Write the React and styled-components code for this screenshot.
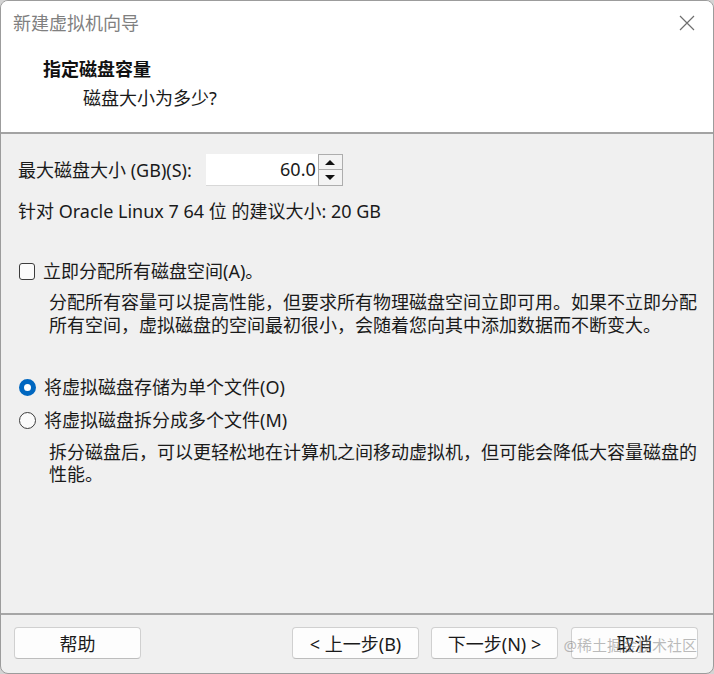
import React from 'react';
import styled, { createGlobalStyle } from 'styled-components';

const GlobalStyle = createGlobalStyle`
  html, body {
    margin: 0;
    padding: 0;
    background: #d4d4d4;
  }
  body {
    font-family: "Segoe UI", "Noto Sans", "Noto Sans CJK SC", sans-serif;
    color: #1a1a1a;
  }
`;

const Window = styled.div`
  box-sizing: border-box;
  width: 714px;
  height: 674px;
  display: flex;
  flex-direction: column;
  background: #f0f0f0;
  border: 1px solid #9c9c9c;
  border-radius: 8px;
  overflow: hidden;
  position: relative;
  font-size: 18px;
`;

const Header = styled.header`
  background: #ffffff;
  height: 131px;
  border-bottom: 2px solid #a3a3a3;
  flex-shrink: 0;
`;

const TitleBar = styled.div`
  height: 43px;
  display: flex;
  align-items: center;
  justify-content: space-between;
  padding: 0 18px 0 12px;
`;

const Title = styled.span`
  color: #808080;
  font-size: 18px;
  line-height: 24px;
`;

const CloseIcon = styled.svg`
  width: 16px;
  height: 16px;
  display: block;
`;

const Heading = styled.h1`
  margin: 13px 0 0 42px;
  font-size: 18px;
  font-weight: 700;
  line-height: 24px;
  color: #111;
`;

const SubHeading = styled.p`
  margin: 5px 0 0 82px;
  font-size: 18px;
  line-height: 24px;
`;

const Body = styled.main`
  flex: 1;
  padding: 20px 8px 0 17px;
`;

const FieldRow = styled.div`
  display: flex;
  align-items: center;
  height: 32px;
`;

const FieldLabel = styled.label`
  line-height: 24px;
  margin-right: 14px;
`;

const SpinBox = styled.div`
  display: flex;
  height: 32px;
`;

const SpinInput = styled.div`
  box-sizing: border-box;
  width: 112px;
  height: 32px;
  background: #fff;
  border-bottom: 1px solid #d8d8d8;
  text-align: right;
  padding-right: 2px;
  line-height: 31px;
`;

const SpinButtons = styled.div`
  display: flex;
  flex-direction: column;
  width: 25px;
`;

const SpinButton = styled.div`
  box-sizing: border-box;
  height: 16px;
  border: 1px solid #adadad;
  border-top-width: ${p => (p.$bottom ? '0' : '1px')};
  background: #f3f3f3;
  display: flex;
  align-items: center;
  justify-content: center;
`;

const Arrow = styled.span`
  width: 0;
  height: 0;
  border-left: 5px solid transparent;
  border-right: 5px solid transparent;
  ${p => (p.$down ? 'border-top: 5px solid #111;' : 'border-bottom: 5px solid #111;')}
`;

const Hint = styled.p`
  margin: 13px 0 0 0;
  line-height: 24px;
`;

const OptionRow = styled.div`
  display: flex;
  align-items: center;
  gap: 8px;
  line-height: 24px;
  margin-top: ${p => p.$gap}px;
`;

const CheckBox = styled.span`
  box-sizing: border-box;
  width: 16px;
  height: 17px;
  border: 1px solid #3c3c3c;
  border-radius: 3px;
  background: #fbfbfb;
  flex-shrink: 0;
  margin-left: 1px;
`;

const Radio = styled.span`
  box-sizing: border-box;
  width: 17px;
  height: 17px;
  border-radius: 50%;
  flex-shrink: 0;
  margin-left: 1px;
  ${p =>
    p.$checked
      ? 'background: #fff; border: 5px solid #0067c0;'
      : 'background: #fbfbfb; border: 1px solid #3c3c3c;'}
`;

const Description = styled.p`
  margin: ${p => p.$top}px 0 0 31px;
  line-height: ${p => p.$lh}px;
  color: #1a1a1a;
`;

const Footer = styled.footer`
  flex-shrink: 0;
  border-top: 2px solid #a6a6a6;
  padding: 12px 15px 14px 13px;
  display: flex;
  align-items: center;
`;

const Button = styled.button`
  box-sizing: border-box;
  width: 127px;
  height: 32px;
  background: #fdfdfd;
  border: 1px solid #d0d0d0;
  border-bottom-color: #bdbdbd;
  border-radius: 4px;
  font: inherit;
  font-size: 18px;
  color: #1a1a1a;
  padding: 0;
  margin-left: ${p => p.$ml || 0}px;
`;

const Spacer = styled.div`
  flex: 1;
`;

const Watermark = styled.span`
  position: absolute;
  right: 16px;
  bottom: 18px;
  font-size: 15px;
  color: rgba(120, 120, 120, 0.5);
  line-height: 20px;
  pointer-events: none;
`;

const App = () => {
  return (
    <>
      <GlobalStyle />
      <Window>
        <Header>
          <TitleBar>
            <Title>新建虚拟机向导</Title>
            <CloseIcon viewBox="0 0 16 16">
              <path d="M1 1 L15 15 M15 1 L1 15" stroke="#6e6e6e" strokeWidth="1.2" fill="none" />
            </CloseIcon>
          </TitleBar>
          <Heading>指定磁盘容量</Heading>
          <SubHeading>磁盘大小为多少?</SubHeading>
        </Header>

        <Body>
          <FieldRow>
            <FieldLabel>最大磁盘大小 (GB)(S):</FieldLabel>
            <SpinBox>
              <SpinInput>60.0</SpinInput>
              <SpinButtons>
                <SpinButton><Arrow /></SpinButton>
                <SpinButton $bottom><Arrow $down /></SpinButton>
              </SpinButtons>
            </SpinBox>
          </FieldRow>
          <Hint>针对 Oracle Linux 7 64 位 的建议大小: 20 GB</Hint>

          <OptionRow $gap={36}>
            <CheckBox />
            <span>立即分配所有磁盘空间(A)。</span>
          </OptionRow>
          <Description $top={8} $lh={23}>
            分配所有容量可以提高性能，但要求所有物理磁盘空间立即可用。如果不立即分配所有空间，虚拟磁盘的空间最初很小，会随着您向其中添加数据而不断变大。
          </Description>

          <OptionRow $gap={38}>
            <Radio $checked />
            <span>将虚拟磁盘存储为单个文件(O)</span>
          </OptionRow>
          <OptionRow $gap={9}>
            <Radio />
            <span>将虚拟磁盘拆分成多个文件(M)</span>
          </OptionRow>
          <Description $top={9} $lh={22}>
            拆分磁盘后，可以更轻松地在计算机之间移动虚拟机，但可能会降低大容量磁盘的性能。
          </Description>
        </Body>

        <Footer>
          <Button>帮助</Button>
          <Spacer />
          <Button>&lt; 上一步(B)</Button>
          <Button $ml={12}>下一步(N) &gt;</Button>
          <Button $ml={13}>取消</Button>
        </Footer>
        <Watermark>@稀土掘金技术社区</Watermark>
      </Window>
    </>
  );
};

export default App;
